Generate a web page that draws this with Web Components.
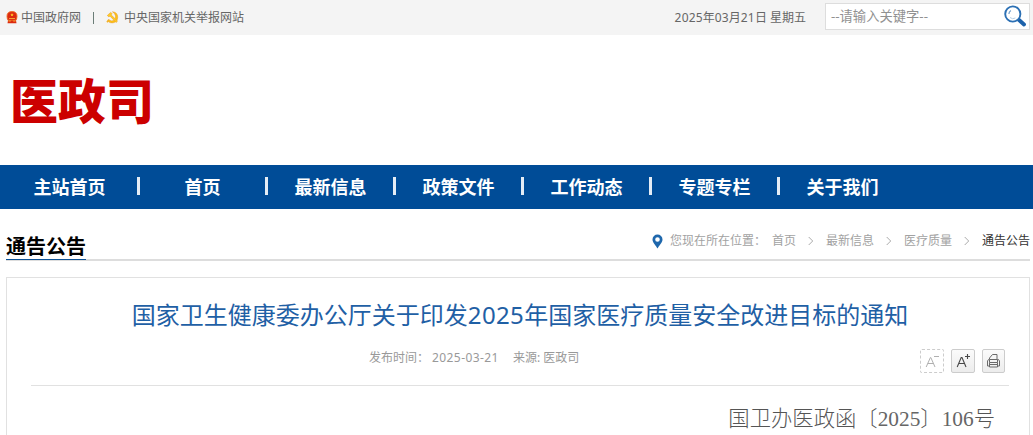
<!DOCTYPE html>
<html lang="zh-CN">
<head>
<meta charset="utf-8">
<title>医政司</title>
<style>
  html, body { margin: 0; padding: 0; }
  body {
    width: 1033px;
    height: 435px;
    overflow: hidden;
    background: #fff;
    font: 12px/20px "Noto Sans", "Noto Sans CJK SC", sans-serif;
    color: #666;
  }
</style>
</head>
<body>
<gov-page></gov-page>

<script>
// barra superior
class TopBar extends HTMLElement {
  constructor() {
    super();
    this.attachShadow({ mode: 'open' });
  }
  connectedCallback() {
    this.shadowRoot.innerHTML = `
      <style>
        :host {
          display: flex;
          align-items: center;
          height: 35px;
          padding: 0 3px 0 6px;
          box-sizing: border-box;
          background: #f4f4f4;
          color: #666;
        }
        svg { display: block; flex: none; }
        .link { display: flex; align-items: center; gap: 3px; white-space: nowrap; }
        .link.report { gap: 5px; }
        .bar { width: 1px; height: 12px; margin: 0 12px 0 12px; background: #6b7d77; }
        .date { margin-left: auto; margin-right: 19px; white-space: pre; }
        .num { letter-spacing: .16px; }
      </style>
      <div class="link">
        <svg width="12" height="13" viewBox="0 0 12 13">
          <path d="M1 5.2Q1 .5 6 .5t5 4.7q0 2.600-1 4.300l.5 2.700H1.500L2 9.500Q1 7.800 1 5.200z" fill="#dc2a10"/>
          <path d="M1 5.200Q1 .6 6 .6t5 4.600q0 2.500-1.200 4.100H2.200Q1 7.700 1 5.200z" fill="none" stroke="#ed6a22" stroke-width=".9"/>
          <path d="M6 2l.5 1.200 1.200.1-.9.800.3 1.200L6 4.700l-1.100.6.3-1.200-.9-.8 1.200-.1z" fill="#ffc928"/>
          <path d="M3 7.500h6M2.500 10h2.300M7.200 10h2.300" stroke="#f7b23b" stroke-width=".9"/>
        </svg>
        <span>中国政府网</span>
      </div>
      <div class="bar"></div>
      <div class="link report">
        <svg width="13" height="13" viewBox="0 0 13 13">
          <path d="M6.500.8q5 .5 5.200 5.300 0 4.700-4.600 5.700-3.600.5-5.300-1.700l1.300-1.200q2.500 1.700 4.700.6 2.300-1.500 1.800-4.500Q9.200 2.500 6.500.8z" fill="#ffc30f" stroke="#e9a030" stroke-width=".6"/>
          <path d="M1.300 4.500L4.600 1.400l1.600 1.300-1.100 1.100 6.400 6.300-1.400 1.300L3.900 5l-1 1z" fill="#ffcd22" stroke="#e9a030" stroke-width=".6"/>
          <path d="M3 8.500L1 11.300" stroke="#f0b12c" stroke-width="1.600"/>
        </svg>
        <span>中央国家机关举报网站</span>
      </div>
      <div class="date"><span class="num">2025</span>年<span class="num">03</span>月<span class="num">21</span>日 星期五</div>
      <search-box>--请输入关键字--</search-box>
    `;
  }
}

class SearchBox extends HTMLElement {
  constructor() {
    super();
    this.attachShadow({ mode: 'open' });
  }
  connectedCallback() {
    this.shadowRoot.innerHTML = `
      <style>
        :host {
          display: flex;
          align-items: center;
          justify-content: space-between;
          width: 205px;
          height: 27px;
          margin-top: -2px;
          padding: 0 3px 0 5px;
          box-sizing: border-box;
          border: 1px solid #ddd;
          background: #fff;
          color: #919191;
          font-size: 13.300px;
        }
        span { margin-top: -2px; }
        svg { display: block; margin-top: -1px; }
      </style>
      <span><slot></slot></span>
      <svg width="22" height="22" viewBox="0 0 22 22">
        <path d="M14.500 14.500l5.500 5" stroke="#1d62ab" stroke-width="3.800" stroke-linecap="round"/>
        <circle cx="8.800" cy="9" r="7.600" fill="#fff" stroke="#2c70b4" stroke-width="1.900"/>
        <path d="M4.900 9a4.300 4.300 0 0 1 2-3.500" fill="none" stroke="#75a2cf" stroke-width="1.300"/>
        <path d="M6 12.500q2.600 2.200 5.400.5" fill="none" stroke="#b7d0e6" stroke-width="1"/>
      </svg>
    `;
  }
}

// menu principal
class MainNav extends HTMLElement {
  constructor() {
    super();
    this.attachShadow({ mode: 'open' });
  }
  connectedCallback() {
    const items = this.getAttribute('items').split(',');
    this.shadowRoot.innerHTML = `
      <style>
        :host {
          display: flex;
          height: 44px;
          padding-left: 2px;
          background: #004c97;
          color: #fff;
          font-size: 18px;
          font-weight: 700;
        }
        .item { display: flex; align-items: center; width: 128px; }
        .item:first-of-type { width: 135px; }
        .item + .item::before {
          content: "";
          width: 3px;
          height: 18px;
          margin-top: -2px;
          background: #e4ecf5;
        }
        .item span { flex: 1; text-align: center; white-space: nowrap; }
      </style>
      ${items.map(item => `<div class="item"><span>${item}</span></div>`).join('')}
    `;
  }
}

class BreadCrumb extends HTMLElement {
  constructor() {
    super();
    this.attachShadow({ mode: 'open' });
  }
  connectedCallback() {
    const items = this.getAttribute('items').split(',');
    const arrow = '<svg class="arrow" width="6" height="10" viewBox="0 0 6 10"><path d="M.7 1l4 4-4 4" fill="none" stroke="#aaa"/></svg>';
    this.shadowRoot.innerHTML = `
      <style>
        :host { display: flex; align-items: center; height: 20px; color: #a2a2a2; white-space: nowrap; }
        svg { display: block; }
        .label { width: 102px; margin-left: 7px; }
        .arrow { margin: 0 12px; }
        .now { color: #333; }
      </style>
      <svg width="11" height="15" viewBox="0 0 11 15">
        <path fill="#1e67ac" fill-rule="evenodd" d="M5.500.5a5 5 0 0 1 5 5C10.500 8.500 7 11.500 5.500 14.500 4 11.500.5 8.500.5 5.500a5 5 0 0 1 5-5zm0 2.700a2.300 2.300 0 1 0 0 4.600 2.300 2.300 0 0 0 0-4.600z"/>
      </svg>
      <span class="label">您现在所在位置：</span>
      ${items.map((item, i) => `<span class="${i === items.length - 1 ? 'now' : ''}">${item}</span>`).join(`<span>${arrow}</span>`)}
    `;
  }
}

// titulo de la seccion con la linea de abajo
class SectionHead extends HTMLElement {
  constructor() {
    super();
    this.attachShadow({ mode: 'open' });
  }
  connectedCallback() {
    this.shadowRoot.innerHTML = `
      <style>
        :host {
          display: flex;
          justify-content: space-between;
          height: 52px;
          margin: 0 3px 0 6px;
          box-sizing: border-box;
          background: linear-gradient(#ddd, #ddd) bottom / 100% 2px no-repeat;
        }
        h2 {
          height: 28px;
          margin: 22px 0 0;
          border-bottom: 1px solid #0c5296;
          font-size: 20px;
          line-height: 31px;
          font-weight: 700;
          color: #000;
        }
        ::slotted(bread-crumb) { margin-top: 22px; }
      </style>
      <h2>${this.getAttribute('heading')}</h2>
      <slot></slot>
    `;
  }
}

class ToolButton extends HTMLElement {
  constructor() {
    super();
    this.attachShadow({ mode: 'open' });
  }
  connectedCallback() {
    const icons = {
      minus: '<path d="M6.200 18l4.200-9.500h.4L15 18M7.700 14.500h5.800M14 7.500h5" stroke="#b0b0b0"/>',
      plus: '<path d="M6.200 18l4-9.500h.8l4 9.500M7.700 14.500h5.800M14 7.500h5M16.500 5v5" stroke="#484848" stroke-width="1.100"/>',
      print: '<path d="M7.500 10V9l3-3.500h4.500V10M7.500 10.500h-1l-1 1.500v5h2M15.500 10.500h1l1 1.500v5h-2M7.500 10.500h8M7.500 13.500h8v4.500h-8zM7.500 10.500v3M15.500 10.500v3M7.500 15.500h8" stroke="#6a6a6a"/>'
    };
    const icon = this.getAttribute('icon');
    this.shadowRoot.innerHTML = `
      <style>
        :host {
          display: block;
          width: 24px;
          height: 24px;
          box-sizing: border-box;
          border: 1px solid #ccc;
          border-radius: 2px;
          background: linear-gradient(#fbfbfb, #ececec);
        }
        :host([icon="minus"]) { border-style: dashed; background: #fff; }
        :host([icon="print"]) { width: 23px; }
        svg { display: block; margin: -1px; }
      </style>
      <svg width="24" height="24" viewBox="0 0 24 24" fill="none">${icons[icon]}</svg>
    `;
  }
}

class ArticleBox extends HTMLElement {
  constructor() {
    super();
    this.attachShadow({ mode: 'open' });
  }
  connectedCallback() {
    this.shadowRoot.innerHTML = `
      <style>
        :host {
          display: block;
          height: 158px;
          margin: 16px 3px 0 6px;
          padding: 0 20px 0 24px;
          box-sizing: border-box;
          border: 1px solid #e1e1e1;
          border-bottom: 0;
        }
        h1 {
          margin: 21px 0 0;
          font-size: 24px;
          line-height: 32px;
          font-weight: 400;
          text-align: center;
          white-space: nowrap;
          color: #1f60a5;
        }
        h1 span { letter-spacing: .35px; }
        .meta {
          display: flex;
          height: 55px;
          box-sizing: border-box;
          border-bottom: 1px solid #e1e1e1;
          color: #999;
        }
        .info { display: flex; width: 551px; padding: 17px 0 0 338px; white-space: nowrap; }
        .time { width: 63px; }
        .day { width: 81px; letter-spacing: .42px; }
        .tools { display: flex; gap: 7px; padding-top: 18px; }
        .number {
          margin: 17px 14px 0 0;
          font: 300 21.333px/28px "Noto Sans CJK SC", sans-serif;
          text-align: right;
          color: #555;
        }
        .number span { font-family: "Liberation Serif", serif; font-weight: 400; color: #666; }
      </style>
      <h1>国家卫生健康委办公厅关于印发<span>2025</span>年国家医疗质量安全改进目标的通知</h1>
      <div class="meta">
        <div class="info">
          <span class="time">发布时间：</span>
          <span class="day">2025-03-21</span>
          <span>来源: 医政司</span>
        </div>
        <div class="tools">
          <tool-button icon="minus"></tool-button>
          <tool-button icon="plus"></tool-button>
          <tool-button icon="print"></tool-button>
        </div>
      </div>
      <div class="number">国卫办医政函〔<span>2025</span>〕<span>106</span>号</div>
    `;
  }
}

class GovPage extends HTMLElement {
  constructor() {
    super();
    this.attachShadow({ mode: 'open' });
  }
  connectedCallback() {
    this.shadowRoot.innerHTML = `
      <style>
        :host { display: block; }
        .logo {
          height: 130px;
          padding-left: 10px;
          font-size: 48px;
          line-height: 131px;
          font-weight: 900;
          color: #c00;
        }
      </style>
      <top-bar></top-bar>
      <div class="logo">医政司</div>
      <main-nav items="主站首页,首页,最新信息,政策文件,工作动态,专题专栏,关于我们"></main-nav>
      <section-head heading="通告公告">
        <bread-crumb items="首页,最新信息,医疗质量,通告公告"></bread-crumb>
      </section-head>
      <article-box></article-box>
    `;
  }
}

customElements.define('search-box', SearchBox);
customElements.define('top-bar', TopBar);
customElements.define('main-nav', MainNav);
customElements.define('bread-crumb', BreadCrumb);
customElements.define('section-head', SectionHead);
customElements.define('tool-button', ToolButton);
customElements.define('article-box', ArticleBox);
customElements.define('gov-page', GovPage);
</script>
</body>
</html>
